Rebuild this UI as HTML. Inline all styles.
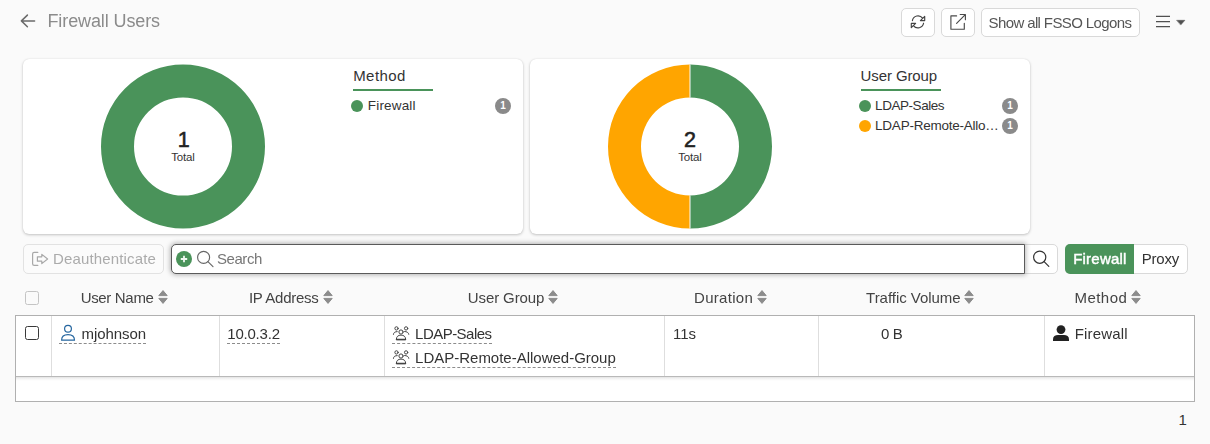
<!DOCTYPE html>
<html><head><meta charset="utf-8"><title>Firewall Users</title>
<style>
*{box-sizing:border-box;margin:0;padding:0}
html,body{width:1210px;height:444px;overflow:hidden}
body{position:relative;background:#fafafa;font-family:"Liberation Sans",sans-serif}
.t{position:absolute;white-space:pre}
.gl{position:absolute;left:0;top:0;width:1210px;height:444px;will-change:transform}
.a{position:absolute}
.btn{position:absolute;background:#fff;border:1px solid #d9d9d9;border-radius:5px}
.card{position:absolute;background:#fff;border-radius:6px;box-shadow:0 1px 3px rgba(0,0,0,.22),0 0 1px rgba(0,0,0,.12)}
.dot{position:absolute;width:12px;height:12px;border-radius:50%}
.badge{position:absolute;width:16px;height:16px;border-radius:50%;background:#8a8a8a}
.ul{position:absolute;height:2px;background:#4a935a}
.dash{position:absolute;height:0;border-bottom:1px dashed #8c8c8c}
.vsep{position:absolute;width:1px;background:#dedede;top:316px;height:60px}
svg{position:absolute;overflow:visible}

</style></head>
<body>
<!-- header -->
<svg style="left:0;top:0" width="1210" height="50" viewBox="0 0 1210 50" fill="none" stroke-linecap="round" stroke-linejoin="round">
  <!-- back arrow -->
  <path d="M34.6 20.9H21.6M27.4 15.1L21.4 20.9L27.4 26.7" stroke="#6a6a6a" stroke-width="1.5"/>
</svg>
<div class="btn" style="left:901px;top:8px;width:34px;height:28.5px"></div>
<div class="btn" style="left:941px;top:8px;width:34px;height:28.5px"></div>
<div class="btn" style="left:981px;top:8px;width:159px;height:28.5px"></div>
<svg style="left:0;top:0" width="1210" height="50" viewBox="0 0 1210 50" fill="none" stroke-linecap="round" stroke-linejoin="round">
  <!-- refresh -->
  <g stroke="#444" stroke-width="1.15">
    <path d="M912.4 20.6A5.7 5.7 0 0 1 922.6 18.2"/>
    <path d="M924.7 16.3V20.6H920.4Z"/>
    <path d="M923.6 23.2A5.7 5.7 0 0 1 913.4 25.6"/>
    <path d="M911.3 27.7V23.4H915.6Z"/>
  </g>
  <!-- external link -->
  <g stroke="#4a4a4a" stroke-width="1.15">
    <path d="M956.6 15.9H950.9V29.2H964.3V23.2"/>
    <path d="M956.6 23.3L965.3 14.6M960.2 14.5H965.4V19.7"/>
  </g>
  <!-- hamburger -->
  <path d="M1156 16.3H1170M1156 21.6H1170M1156 26.6H1170" stroke="#505050" stroke-width="1.25" stroke-linecap="butt"/>
  <path d="M1176.9 20.3H1184.9L1180.9 24.8Z" fill="#505050" stroke="#505050" stroke-width="0.5"/>
</svg>

<!-- cards -->
<div class="card" style="left:23px;top:59px;width:500px;height:175px"></div>
<div class="card" style="left:530px;top:59px;width:500px;height:175px"></div>
<svg style="left:0;top:55px" width="1210" height="185" viewBox="0 55 1210 185">
  <circle cx="183" cy="146.5" r="65.5" fill="none" stroke="#4a935a" stroke-width="33"/>
  <path d="M690 64.5A82 82 0 0 1 690 228.5V195.5A49 49 0 0 0 690 97.5Z" fill="#4a935a"/>
  <path d="M690 64.5A82 82 0 0 0 690 228.5V195.5A49 49 0 0 1 690 97.5Z" fill="#ffa500"/>
  <path d="M690 64.5V97.5M690 195.5V228.5" stroke="#fff" stroke-opacity=".8" stroke-width="1.2"/>
</svg>
<div class="ul" style="left:353px;top:89px;width:80px"></div>
<div class="ul" style="left:860.8px;top:89px;width:80px"></div>
<div class="dot" style="left:351px;top:100px;background:#4a935a"></div>
<div class="dot" style="left:859px;top:100px;background:#4a935a"></div>
<div class="dot" style="left:859px;top:120px;background:#ffa500"></div>
<div class="badge" style="left:495px;top:98px"></div>
<div class="badge" style="left:1002px;top:98px"></div>
<div class="badge" style="left:1002px;top:118px"></div>

<!-- toolbar -->
<div class="btn" style="left:23px;top:244px;width:141px;height:30px;background:#fbfbfb;border-color:#e2e2e2"></div>
<div class="btn" style="left:1020px;top:244px;width:37.5px;height:30px;border-radius:0 5px 5px 0"></div>
<div class="a" style="left:171px;top:244px;width:853.6px;height:30px;background:#fff;border:1.5px solid #5a5a5a;border-radius:5px 0 0 5px;box-shadow:0 0 5px 1px rgba(0,0,0,.28)"></div>
<div class="a" style="left:1065px;top:244px;width:123px;height:30px;border:1px solid #d9d9d9;border-radius:5px;background:#fff"></div>
<div class="a" style="left:1065px;top:244px;width:69px;height:30px;border-radius:5px 0 0 5px;background:#4a935a"></div>
<svg style="left:0;top:240px" width="1210" height="40" viewBox="0 240 1210 40" fill="none" stroke-linecap="round" stroke-linejoin="round">
  <!-- deauth icon -->
  <g stroke="#a8a8a8" stroke-width="1.2">
    <path d="M37.8 252.4H34.2Q32.6 252.4 32.6 254V263.8Q32.6 265.4 34.2 265.4H37.8"/>
    <path d="M37.4 256.8H41.8V254.4L47.6 259L41.8 263.6V261.2H37.4Z"/>
  </g>
  <!-- plus circle -->
  <circle cx="184" cy="259" r="8" fill="#4a935a" stroke="none"/>
  <path d="M180.8 259H187.2M184 255.8V262.2" stroke="#fff" stroke-opacity=".92" stroke-width="1.8" stroke-linecap="butt"/>
  <!-- magnifier in search -->
  <circle cx="203.6" cy="257.4" r="6" stroke="#666" stroke-width="1.15"/>
  <path d="M207.9 261.7L213 266.6" stroke="#666" stroke-width="1.15"/>
  <!-- magnifier button -->
  <circle cx="1039.7" cy="257.2" r="6.1" stroke="#333" stroke-width="1.2"/>
  <path d="M1044.1 261.6L1048.8 266.3" stroke="#333" stroke-width="1.2"/>
</svg>

<!-- table header -->
<div class="a" style="left:25px;top:291px;width:14px;height:14px;border:1px solid #c4c4c4;border-radius:2.5px;background:#fafafa"></div>
<svg style="left:0;top:285px" width="1210" height="25" viewBox="0 285 1210 25">
  <defs><g id="srt" fill="#8c8c8c" stroke="#8c8c8c" stroke-width="1" stroke-linejoin="round"><path d="M0.8 10.6H9.2L5 5.6Z"/><path d="M0.8 13.4H9.2L5 18.4Z"/></g></defs>
  <use href="#srt" x="158" y="285"/>
  <use href="#srt" x="323" y="285"/>
  <use href="#srt" x="548" y="285"/>
  <use href="#srt" x="757" y="285"/>
  <use href="#srt" x="964" y="285"/>
  <use href="#srt" x="1131" y="285"/>
</svg>

<!-- table -->
<div class="a" style="left:15px;top:315px;width:1180px;height:87px;background:#fff;border:1px solid #b0b0b0"></div>
<div class="a" style="left:16px;top:376px;width:1178px;height:1px;background:#b9b9b9"></div>
<div class="a" style="left:16px;top:377px;width:1178px;height:4px;background:linear-gradient(180deg,rgba(0,0,0,.11),rgba(0,0,0,.035) 50%,rgba(0,0,0,0))"></div>
<div class="vsep" style="left:51px"></div>
<div class="vsep" style="left:219px"></div>
<div class="vsep" style="left:384px"></div>
<div class="vsep" style="left:664px"></div>
<div class="vsep" style="left:818px"></div>
<div class="vsep" style="left:1044px"></div>
<div class="a" style="left:25px;top:326px;width:14px;height:14px;border:1.5px solid #3a3a3a;border-radius:2.5px;background:#fff"></div>
<div class="dash" style="left:59px;top:343px;width:87px"></div>
<div class="dash" style="left:227px;top:343px;width:53px"></div>
<div class="dash" style="left:392px;top:343px;width:100px"></div>
<div class="dash" style="left:392px;top:367px;width:224px"></div>
<svg style="left:0;top:320px" width="1210" height="56" viewBox="0 320 1210 56" fill="none" stroke-linecap="round" stroke-linejoin="round">
  <!-- blue user -->
  <g stroke="#25669f" stroke-width="1.2">
    <circle cx="68" cy="328.8" r="3.4"/>
    <path d="M61.6 340.2C61.6 336.6 64.2 334.7 68 334.7C71.8 334.7 74.5 336.6 74.5 340.2Z"/>
  </g>
  <!-- group icon -->
  <defs><g id="grp" stroke="#444" stroke-width="1">
    <circle cx="9" cy="6" r="2.1"/>
    <path d="M4.3 13.3C4.3 10.6 6.2 9.1 9 9.1C11.8 9.1 13.7 10.6 13.7 13.3Z"/>
    <path d="M4.6 13.4H13.4" stroke-width="1.5"/>
    <circle cx="4.5" cy="2.4" r="1.65"/>
    <circle cx="14.1" cy="2.4" r="1.65"/>
    <path d="M1.4 8.4C1.5 6.6 3 5.6 5.2 5.6"/>
    <path d="M12.6 5.5C14.8 5.5 16.6 6.5 16.8 8.3"/>
  </g></defs>
  <use href="#grp" x="392" y="326"/>
  <use href="#grp" x="392" y="350"/>
  <!-- solid user -->
  <g fill="#222">
    <circle cx="1061" cy="329.6" r="4.4"/>
    <path d="M1053 341V339.2C1053 336.4 1055.2 335 1058 335H1064C1066.8 335 1069 336.4 1069 339.2V341Z"/>
  </g>
</svg>

<div class="t" style="left:353.20px;top:66.50px;font-size:15px;line-height:18px;color:#333;font-weight:400;letter-spacing:0.431px;">Method</div>
<div class="t" style="left:367.81px;top:97.72px;font-size:13.5px;line-height:16px;color:#333;font-weight:400;letter-spacing:0.168px;">Firewall</div>
<div class="t" style="left:860.60px;top:66.50px;font-size:15px;line-height:18px;color:#333;font-weight:400;letter-spacing:-0.103px;">User Group</div>
<div class="t" style="left:875.11px;top:97.72px;font-size:13.5px;line-height:16px;color:#333;font-weight:400;letter-spacing:-0.451px;">LDAP-Sales</div>
<div class="t" style="left:875.11px;top:118.12px;font-size:13.5px;line-height:16px;color:#333;font-weight:400;letter-spacing:-0.247px;">LDAP-Remote-Allo…</div>
<div class="t" style="left:171.34px;top:149.92px;font-size:11.5px;line-height:14px;color:#333;font-weight:400;letter-spacing:-0.222px;">Total</div>
<div class="t" style="left:678.35px;top:149.92px;font-size:11.5px;line-height:14px;color:#333;font-weight:400;letter-spacing:-0.222px;">Total</div>
<div class="t" style="left:177.64px;top:126.75px;font-size:21.5px;line-height:26px;color:#222;font-weight:400;letter-spacing:0.000px;-webkit-text-stroke:0.55px #222">1</div>
<div class="t" style="left:683.95px;top:126.75px;font-size:21.5px;line-height:26px;color:#222;font-weight:400;letter-spacing:0.000px;-webkit-text-stroke:0.55px #222">2</div>
<div class="t" style="left:1178.50px;top:410.60px;font-size:15px;line-height:18px;color:#333;font-weight:400;letter-spacing:0.000px;">1</div>
<div class="t" style="left:500.35px;top:100.13px;font-size:10px;line-height:12px;color:#fff;font-weight:700;letter-spacing:0.000px;">1</div>
<div class="t" style="left:1007.35px;top:100.13px;font-size:10px;line-height:12px;color:#fff;font-weight:700;letter-spacing:0.000px;">1</div>
<div class="t" style="left:1007.35px;top:120.13px;font-size:10px;line-height:12px;color:#fff;font-weight:700;letter-spacing:0.000px;">1</div>
<div class="gl">
<div class="t" style="left:47.49px;top:9.56px;font-size:18px;line-height:22px;color:#8b8b8b;font-weight:400;letter-spacing:-0.107px;">Firewall Users</div>
<div class="t" style="left:988.60px;top:13.60px;font-size:15px;line-height:18px;color:#555;font-weight:400;letter-spacing:-0.621px;">Show all FSSO Logons</div>
<div class="t" style="left:53.00px;top:249.60px;font-size:15px;line-height:18px;color:#ababab;font-weight:400;letter-spacing:0.146px;">Deauthenticate</div>
<div class="t" style="left:216.90px;top:249.60px;font-size:15px;line-height:18px;color:#777;font-weight:400;letter-spacing:-0.406px;">Search</div>
<div class="t" style="left:1073.20px;top:249.60px;font-size:15px;line-height:18px;color:#fff;font-weight:400;letter-spacing:0.216px;-webkit-text-stroke:0.45px #fff">Firewall</div>
<div class="t" style="left:1141.80px;top:249.60px;font-size:15px;line-height:18px;color:#333;font-weight:400;letter-spacing:-0.211px;">Proxy</div>
<div class="t" style="left:80.70px;top:289.00px;font-size:15px;line-height:18px;color:#444;font-weight:400;letter-spacing:-0.332px;">User Name</div>
<div class="t" style="left:248.90px;top:289.00px;font-size:15px;line-height:18px;color:#444;font-weight:400;letter-spacing:-0.265px;">IP Address</div>
<div class="t" style="left:467.80px;top:289.00px;font-size:15px;line-height:18px;color:#444;font-weight:400;letter-spacing:-0.103px;">User Group</div>
<div class="t" style="left:694.00px;top:289.00px;font-size:15px;line-height:18px;color:#444;font-weight:400;letter-spacing:0.300px;">Duration</div>
<div class="t" style="left:866.10px;top:289.00px;font-size:15px;line-height:18px;color:#444;font-weight:400;letter-spacing:-0.042px;">Traffic Volume</div>
<div class="t" style="left:1074.40px;top:289.00px;font-size:15px;line-height:18px;color:#444;font-weight:400;letter-spacing:0.491px;">Method</div>
<div class="t" style="left:81.50px;top:324.60px;font-size:15px;line-height:18px;color:#333;font-weight:400;letter-spacing:-0.050px;">mjohnson</div>
<div class="t" style="left:227.30px;top:324.60px;font-size:15px;line-height:18px;color:#333;font-weight:400;letter-spacing:-0.217px;">10.0.3.2</div>
<div class="t" style="left:415.10px;top:324.60px;font-size:15px;line-height:18px;color:#333;font-weight:400;letter-spacing:-0.534px;">LDAP-Sales</div>
<div class="t" style="left:415.10px;top:348.80px;font-size:15px;line-height:18px;color:#333;font-weight:400;letter-spacing:-0.009px;">LDAP-Remote-Allowed-Group</div>
<div class="t" style="left:673.00px;top:324.60px;font-size:15px;line-height:18px;color:#333;font-weight:400;letter-spacing:-0.039px;">11s</div>
<div class="t" style="left:881.10px;top:324.60px;font-size:15px;line-height:18px;color:#333;font-weight:400;letter-spacing:-0.458px;">0 B</div>
<div class="t" style="left:1074.70px;top:324.60px;font-size:15px;line-height:18px;color:#333;font-weight:400;letter-spacing:0.173px;">Firewall</div>
</div>
</body></html>
